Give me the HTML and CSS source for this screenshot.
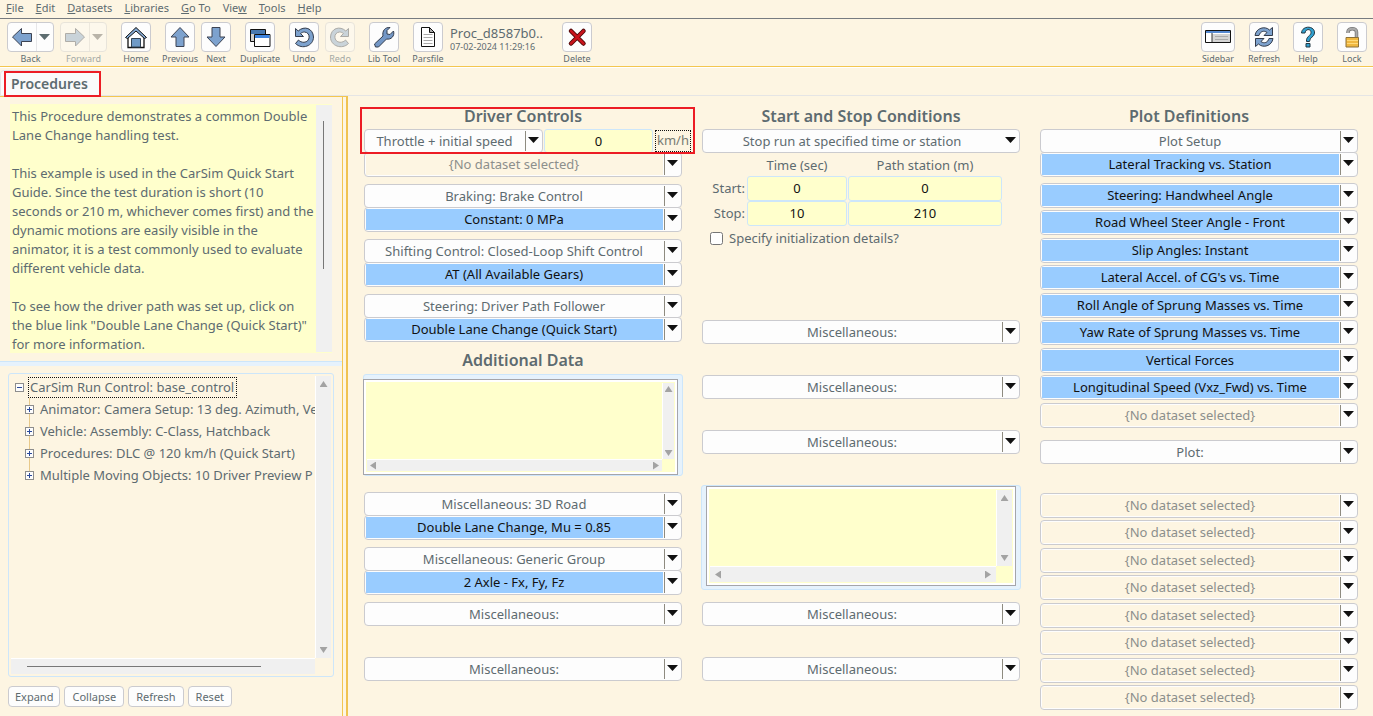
FILE: index.html
```
<!DOCTYPE html>
<html lang="en">
<head>
<meta charset="utf-8">
<title>Procedures</title>
<link rel="stylesheet" href="styles.css">
</head>
<body>
<nav class="menu">
<a href="#"><u>F</u>ile</a><a href="#"><u>E</u>dit</a><a href="#"><u>D</u>atasets</a><a href="#"><u>L</u>ibraries</a><a href="#"><u>G</u>o To</a><a href="#">Vie<u>w</u></a><a href="#"><u>T</u>ools</a><a href="#"><u>H</u>elp</a>
</nav>
<header class="toolbar">
<div class="group">
<button class="tool wide"><span class="face"><svg class="icon" viewBox="0 0 24 24"><path d="M2.500 12 11.500 3.500V8.500H21.500V16.500H11.500V21Z" fill="#7da2ce" stroke="#3c4353"/></svg><svg class="drop" viewBox="0 0 17 28"><path d="M0 0V28" stroke="#d0d0d4"/><path d="M3 11H14L8.500 17Z" fill="#5d6d70"/></svg></span><span>Back</span></button>
<button class="tool wide" disabled><span class="face"><svg class="icon" viewBox="0 0 24 24"><path d="M21.500 12 12.500 3.500V8.500H2.500V16.500H12.500V21Z" fill="#7da2ce" stroke="#3c4353"/></svg><svg class="drop" viewBox="0 0 17 28"><path d="M0 0V28" stroke="#b0b0b4"/><path d="M3 11H14L8.500 17Z" fill="#555"/></svg></span><span>Forward</span></button>
</div>
<div class="group">
<button class="tool"><span class="face"><svg class="icon" viewBox="0 0 24 24"><path d="M4 11.500V22.500H20V11.500L12 4Z" fill="#fff" stroke="#111" stroke-width="1.300"/><path d="M7.500 13.500H16.500V22H7.500Z" fill="#6f9ac6" stroke="#345"/><path d="M1.500 12.500 12 2.500 22.500 12.500 20.500 13.500 12 6 3.500 13.500Z" fill="#86acd7" stroke="#111"/></svg></span><span>Home</span></button>
</div>
<div class="group">
<button class="tool"><span class="face"><svg class="icon" viewBox="0 0 24 24"><path d="M12 2.500 21 12H16V21.500H8V12H3Z" fill="#7da2ce" stroke="#3c4353"/></svg></span><span>Previous</span></button>
<button class="tool"><span class="face"><svg class="icon" viewBox="0 0 24 24"><path d="M12 21.500 21 12H16V2.500H8V12H3Z" fill="#7da2ce" stroke="#3c4353"/></svg></span><span>Next</span></button>
</div>
<div class="group">
<button class="tool"><span class="face"><svg class="icon" viewBox="0 0 24 24"><path d="M2.500 4.500H17.500V16.500H2.500Z" fill="#cfcfcf" stroke="#111"/><path d="M3 5H17V9H3Z" fill="#4878b0"/><path d="M6.500 9.500H22V21.500H6.500Z" fill="#fff" stroke="#111"/><path d="M7 10H21.500V13H7Z" fill="#3f85e0"/></svg></span><span>Duplicate</span></button>
</div>
<div class="group">
<button class="tool"><span class="face"><svg class="icon" viewBox="0 0 24 24"><path d="M3.500 3.500V11.500H11.500L8.500 8.500C10 7.500 11 7 12.500 7C19 7.500 18.500 17 12 17.300C9.500 17.300 8 16.500 6.500 15L3.500 18.500C10 25 21.500 21 21.500 12C21 3 12 .5 6.200 6Z" fill="#7da2ce" stroke="#333c4c"/></svg></span><span>Undo</span></button>
<button class="tool" disabled><span class="face"><svg class="icon" viewBox="0 0 24 24"><path d="M20.500 3.500V11.500H12.500L15.500 8.500C14 7.500 13 7 11.500 7C5 7.500 5.500 17 12 17.300C14.500 17.300 16 16.500 17.500 15L20.500 18.500C14 25 2.500 21 2.500 12C3 3 12 .5 17.800 6Z" fill="#7da2ce" stroke="#333c4c"/></svg></span><span>Redo</span></button>
</div>
<div class="group">
<button class="tool"><span class="face"><svg class="icon" viewBox="0 0 24 24"><path d="M2.500 19 11 11C10 6 13 2 18 2.500L15 5.500V9L18 9.500 21.500 6C23 11 19 15 14.500 14L6.500 22H3.500Z" fill="#7397c6" stroke="#333c4c"/></svg></span><span>Lib Tool</span></button>
</div>
<div class="group">
<button class="tool"><span class="face"><svg class="icon" viewBox="0 0 24 24"><path d="M5.500 2.500H13.500L18.500 7.500V21.500H5.500Z" fill="#fff" stroke="#111"/><path d="M13.500 2.500V7.500H18.500Z" fill="#aaa" stroke="#111"/><path d="M7.500 9.500H16.500M7.500 12.500H16.500M7.500 15.500H16.500M7.500 18.500H16.500" stroke="#aaa"/></svg></span><span>Parsfile</span></button>
<div class="record"><span class="record-name">Proc_d8587b0..</span><time>07-02-2024 11:29:16</time></div>
</div>
<div class="group">
<button class="tool"><span class="face"><svg class="icon" viewBox="0 0 24 24"><path d="M6 6 18.500 18.500M18.500 6 6 18.500" stroke="#4c0808" stroke-width="4.500" stroke-linecap="round"/><path d="M6 6 18.500 18.500M18.500 6 6 18.500" stroke="#c8141c" stroke-width="2.600" stroke-linecap="round"/></svg></span><span>Delete</span></button>
</div>
<div class="group end">
<button class="tool side"><span class="face"><svg class="icon-wide" viewBox="0 0 28 24"><path d="M1.500 5.500H26.500V17.500H1.500Z" fill="#fff" stroke="#111"/><path d="M2 6H26V8H2Z" fill="#5588d0"/><path d="M8 9H26V17H8Z" fill="#d4d4d4"/><path d="M8 8V17" stroke="#333"/><path d="M11 11.500H24M11 14.500H24" stroke="#aaa"/></svg></span><span>Sidebar</span></button>
<button class="tool"><span class="face"><svg class="icon" viewBox="0 0 24 24"><path d="M3 10.500C4 3 13 .5 17.500 5L20.500 2.500V10.500H12L15 7.500C12 5 8 6.500 7 10.500Z" fill="#7da2ce" stroke="#333c4c"/><path d="M21 13.500C20 21 11 23.500 6.500 19L3.500 21.500V13.500H12L9 16.500C12 19 16 17.500 17 13.500Z" fill="#7da2ce" stroke="#333c4c"/></svg></span><span>Refresh</span></button>
<button class="tool"><span class="face"><svg class="icon" viewBox="0 0 24 24"><path d="M5.500 8C6 0 19 .5 18.500 8C18.500 12 13.500 12 13.500 16.500H10.500C10 11 15 11 15 7.500C15 3.500 9.500 3.500 9 8Z" fill="#30a0d0" stroke="#233844"/><path d="M10 18.500H14V22H10Z" fill="#30a0d0" stroke="#233844"/></svg></span><span>Help</span></button>
<button class="tool"><span class="face"><svg class="icon" viewBox="0 0 24 24"><path d="M8 8V7C8 2.500 16.500 2.500 16.500 7V13" fill="none" stroke="#777" stroke-width="3.500"/><path d="M8 8V7C8 2.500 16.500 2.500 16.500 7V13" fill="none" stroke="#aaa" stroke-width="2"/><path d="M6 12.500H18.500V22H6Z" fill="#f0b840" stroke="#8c7138"/><path d="M7 15.500H18M7 18.500H18" stroke="#ffda7a"/></svg></span><span>Lock</span></button>
</div>
</header>
<div class="tabs"><button class="tab">Procedures<span class="mark"></span></button></div>
<div class="body">
<aside>
<div class="notes">
<div class="notes-text">This Procedure demonstrates a common Double<br>Lane Change handling test.<br><br>This example is used in the CarSim Quick Start<br>Guide. Since the test duration is short (10<br>seconds or 210 m, whichever comes first) and the<br>dynamic motions are easily visible in the<br>animator, it is a test commonly used to evaluate<br>different vehicle data.<br><br>To see how the driver path was set up, click on<br>the blue link "Double Lane Change (Quick Start)"<br>for more information.</div>
<div class="track"><i></i></div>
</div>
<div class="split"></div>
<div class="tree">
<ul>
<li class="root"><svg class="node" viewBox="0 0 9 9"><rect x=".5" y=".5" width="8" height="8" fill="#fdfdfd" stroke="#8d8d8d"/><path d="M2 4.500H7" stroke="#2b4a9a"/></svg><span class="focus">CarSim Run Control: base_control</span></li>
<li class="child"><svg class="node" viewBox="0 0 9 9"><rect x=".5" y=".5" width="8" height="8" fill="#fdfdfd" stroke="#8d8d8d"/><path d="M2 4.500H7M4.500 2V7" stroke="#2b4a9a"/></svg><span>Animator: Camera Setup: 13 deg. Azimuth, Ve</span></li>
<li class="child"><svg class="node" viewBox="0 0 9 9"><rect x=".5" y=".5" width="8" height="8" fill="#fdfdfd" stroke="#8d8d8d"/><path d="M2 4.500H7M4.500 2V7" stroke="#2b4a9a"/></svg><span>Vehicle: Assembly: C-Class, Hatchback</span></li>
<li class="child"><svg class="node" viewBox="0 0 9 9"><rect x=".5" y=".5" width="8" height="8" fill="#fdfdfd" stroke="#8d8d8d"/><path d="M2 4.500H7M4.500 2V7" stroke="#2b4a9a"/></svg><span>Procedures: DLC @ 120 km/h (Quick Start)</span></li>
<li class="child"><svg class="node" viewBox="0 0 9 9"><rect x=".5" y=".5" width="8" height="8" fill="#fdfdfd" stroke="#8d8d8d"/><path d="M2 4.500H7M4.500 2V7" stroke="#2b4a9a"/></svg><span>Multiple Moving Objects: 10 Driver Preview P</span></li>
</ul>
<div class="vbar"><i class="up"></i><i class="down"></i></div>
<div class="hbar"><b></b></div>
</div>
<div class="actions"><button>Expand</button><button>Collapse</button><button>Refresh</button><button>Reset</button></div>
</aside>
<main>
<section>
<div class="marked">
<h2>Driver Controls</h2>
<div class="speed">
<div class="combo"><select aria-label="Throttle mode"><option>Throttle + initial speed</option></select></div>
<input value="0" aria-label="Initial speed"><span class="focus unit">km/h</span>
</div>
<span class="mark"></span>
</div>
<div class="combo tall empty"><select aria-label="Throttle dataset"><option>{No dataset selected}</option></select></div>
<div class="pair"><div class="combo"><select aria-label="Braking"><option>Braking: Brake Control</option></select></div><div class="combo tall blue"><select aria-label="Braking dataset"><option>Constant: 0 MPa</option></select></div></div>
<div class="pair"><div class="combo"><select aria-label="Shifting"><option>Shifting Control: Closed-Loop Shift Control</option></select></div><div class="combo tall blue"><select aria-label="Shifting dataset"><option>AT (All Available Gears)</option></select></div></div>
<div class="pair"><div class="combo"><select aria-label="Steering"><option>Steering: Driver Path Follower</option></select></div><div class="combo tall blue"><select aria-label="Steering dataset"><option>Double Lane Change (Quick Start)</option></select></div></div>
<h2 class="additional">Additional Data</h2>
<div class="memo first"><div class="sheet"><textarea aria-label="Additional data"></textarea><div class="vbar"><i class="up"></i><i class="down"></i></div><div class="hbar"><i class="left"></i><i class="right"></i></div></div></div>
<div class="lower">
<div class="pair"><div class="combo"><select aria-label="Road"><option>Miscellaneous: 3D Road</option></select></div><div class="combo tall blue"><select aria-label="Road dataset"><option>Double Lane Change, Mu = 0.85</option></select></div></div>
<div class="pair"><div class="combo"><select aria-label="Generic group"><option>Miscellaneous: Generic Group</option></select></div><div class="combo tall blue"><select aria-label="Group dataset"><option>2 Axle - Fx, Fy, Fz</option></select></div></div>
<div class="slot"><div class="combo"><select aria-label="Miscellaneous 1"><option>Miscellaneous:</option></select></div></div>
<div class="combo"><select aria-label="Miscellaneous 2"><option>Miscellaneous:</option></select></div>
</div>
</section>
<section>
<h2>Start and Stop Conditions</h2>
<div class="combo plain"><select aria-label="Stop condition"><option>Stop run at specified time or station</option></select></div>
<div class="times">
<span></span><span class="head">Time (sec)</span><span class="head">Path station (m)</span>
<span>Start:</span><input value="0" aria-label="Start time"><input value="0" aria-label="Start station">
<span>Stop:</span><input value="10" aria-label="Stop time"><input value="210" aria-label="Stop station">
</div>
<label class="check"><input type="checkbox">Specify initialization details?</label>
<div class="middle">
<div class="slot"><div class="combo"><select aria-label="Miscellaneous 3"><option>Miscellaneous:</option></select></div></div>
<div class="slot"><div class="combo"><select aria-label="Miscellaneous 4"><option>Miscellaneous:</option></select></div></div>
<div class="slot"><div class="combo"><select aria-label="Miscellaneous 5"><option>Miscellaneous:</option></select></div></div>
</div>
<div class="memo second"><div class="sheet"><textarea aria-label="Extra data"></textarea><div class="vbar"><i class="up"></i><i class="down"></i></div><div class="hbar"><i class="left"></i><i class="right"></i></div></div></div>
<div class="slot"><div class="combo"><select aria-label="Miscellaneous 6"><option>Miscellaneous:</option></select></div></div>
<div class="combo"><select aria-label="Miscellaneous 7"><option>Miscellaneous:</option></select></div>
</section>
<section>
<h2 class="plot-title">Plot Definitions</h2>
<div class="combo"><select aria-label="Plot setup"><option>Plot Setup</option></select></div>
<div class="combo tall blue"><select aria-label="Plot 1"><option>Lateral Tracking vs. Station</option></select></div>
<div class="plots">
<div class="combo blue"><select aria-label="Plot 2"><option>Steering: Handwheel Angle</option></select></div>
<div class="combo blue"><select aria-label="Plot 3"><option>Road Wheel Steer Angle - Front</option></select></div>
<div class="combo blue"><select aria-label="Plot 4"><option>Slip Angles: Instant</option></select></div>
<div class="combo blue"><select aria-label="Plot 5"><option>Lateral Accel. of CG's vs. Time</option></select></div>
<div class="combo blue"><select aria-label="Plot 6"><option>Roll Angle of Sprung Masses vs. Time</option></select></div>
<div class="combo blue"><select aria-label="Plot 7"><option>Yaw Rate of Sprung Masses vs. Time</option></select></div>
<div class="combo blue"><select aria-label="Plot 8"><option>Vertical Forces</option></select></div>
<div class="combo blue"><select aria-label="Plot 9"><option>Longitudinal Speed (Vxz_Fwd) vs. Time</option></select></div>
<div class="combo empty"><select aria-label="Plot 10"><option>{No dataset selected}</option></select></div>
</div>
<div class="combo single"><select aria-label="Plot kind"><option>Plot:</option></select></div>
<div class="plots more">
<div class="combo empty"><select aria-label="Plot 11"><option>{No dataset selected}</option></select></div>
<div class="combo empty"><select aria-label="Plot 12"><option>{No dataset selected}</option></select></div>
<div class="combo empty"><select aria-label="Plot 13"><option>{No dataset selected}</option></select></div>
<div class="combo empty"><select aria-label="Plot 14"><option>{No dataset selected}</option></select></div>
<div class="combo empty"><select aria-label="Plot 15"><option>{No dataset selected}</option></select></div>
<div class="combo empty"><select aria-label="Plot 16"><option>{No dataset selected}</option></select></div>
<div class="combo empty"><select aria-label="Plot 17"><option>{No dataset selected}</option></select></div>
<div class="combo empty"><select aria-label="Plot 18"><option>{No dataset selected}</option></select></div>
</div>
</section>
</main>
</div>
</body>
</html>
```
FILE: styles.css
```
* { box-sizing: border-box; }
body {
  margin: 0;
  min-height: 100vh;
  display: flex;
  flex-direction: column;
  background: #fdf5e2;
  color: #5d6b70;
  font: 13px/19px "Noto Sans", "Open Sans", sans-serif;
}
button, select, input, textarea { font: inherit; color: inherit; margin: 0; }
svg { display: block; fill: none; }

.menu {
  display: flex;
  gap: 12px;
  height: 19px;
  padding: 0 6px;
  border-bottom: 1px solid #777b80;
  font-size: 11px;
  line-height: 16px;
}
.menu a { color: inherit; text-decoration: none; }

.toolbar {
  display: flex;
  gap: 14px;
  height: 48px;
  padding: 3px 6px 0 7px;
  border-bottom: 1px solid #f3c650;
}
.group { display: flex; gap: 6px; }
.end { margin-left: auto; gap: 14px; }
.tool {
  width: 30px;
  height: 42px;
  padding: 0;
  border: 0;
  background: none;
  display: flex;
  flex-direction: column;
  align-items: center;
  font-size: 9px;
  line-height: 14px;
  white-space: nowrap;
}
.wide { width: 47px; }
.side { width: 34px; }
.tool:disabled .face { opacity: 0.4; }
.tool:disabled { color: #a3a8a4; }
.face {
  flex: none;
  display: flex;
  align-items: center;
  justify-content: center;
  width: 100%;
  height: 30px;
  border: 1px solid #cbcbcf;
  border-radius: 4px;
  background: #fdfdfd;
}
.icon { width: 24px; height: 24px; }
.icon-wide { width: 28px; height: 24px; }
.drop { width: 17px; height: 28px; }
.wide .face { justify-content: space-between; padding-left: 2px; }
.record { display: flex; flex-direction: column; min-width: 99px; padding: 3px 0 0 1px; }
.record-name { line-height: 16px; }
.record time { font-size: 9px; line-height: 12px; }

.tabs {
  height: 29px;
  padding-top: 2px;
  border-top: 1px solid #fff;
  border-bottom: 1px solid #e5e5e5;
}
.tab {
  position: relative;
  height: 26px;
  width: 101px;
  padding: 0 0 0 10px;
  border: 1px solid #e5e5e5;
  border-radius: 4px 4px 0 0;
  background: #fafafa;
  font-size: 14px;
  font-weight: 600;
  text-align: left;
}
.mark {
  position: absolute;
  inset: 0 -1px -2px 3px;
  border: 2px solid #ec1c24;
  pointer-events: none;
}

.body { flex: 1; display: flex; }
aside {
  width: 348px;
  flex: none;
  display: flex;
  flex-direction: column;
  border-top: 1px solid #f3c650;
  border-right: 2px solid #f0c350;
  padding-right: 4px;
  box-shadow: inset -3px 0 #fdf5e2, inset -4px 0 #f3c650;
}
.notes, .split, .actions { flex: none; }
.notes { display: flex; margin: 7px 10px 8px; height: 249px; background: #ffc; }
.notes-text { flex: 1; min-width: 0; padding: 3px 0 0 2px; white-space: nowrap; }
.track { width: 16px; flex: none; margin: 1px 0; background: #f0f0f0; padding: 16px 7px 0; }
.track i { display: block; width: 1px; height: 148px; background: #777; }
.split { height: 5px; border-top: 1px solid #cde6fa; background: #e6f2fc; }
.tree {
  flex: 1;
  min-height: 0;
  margin: 7px 8px 0;
  border: 1px solid #cde6fa;
  border-radius: 3px;
  padding: 2px;
  display: grid;
  grid-template: minmax(0, 1fr) 16px / minmax(0, 1fr) 16px;
}
.tree ul { margin: 0; padding: 0 0 0 14px; list-style: none; overflow: hidden; }
.tree li { display: flex; align-items: center; gap: 6px; height: 22px; white-space: nowrap; }
.tree .root { margin-left: -10px; gap: 5px; }
.child { background: linear-gradient(90deg, transparent 4px, #e8c98a 4px 5px, transparent 5px); }
.child:last-child { background-size: 100% 50%; background-repeat: no-repeat; }
.node { width: 9px; height: 9px; flex: none; }
.focus { outline: 1px dotted #111; padding: 0 2px 0 1px; }

.vbar, .hbar { background: #f0f0f0; display: flex; justify-content: space-between; align-items: center; }
.vbar { flex-direction: column; border-left: 1px solid #fff; padding: 5px 0; }
.hbar { border-top: 1px solid #fff; padding: 0 5px; }
.hbar b { width: 234px; height: 1px; margin-left: 11px; background: #777; }
.up, .down { width: 8px; height: 6px; background: #a3a3a3; }
.left, .right { width: 6px; height: 8px; background: #a3a3a3; }
.up { clip-path: polygon(50% 0, 100% 100%, 0 100%); }
.down { clip-path: polygon(0 0, 100% 0, 50% 100%); }
.left { clip-path: polygon(0 50%, 100% 0, 100% 100%); }
.right { clip-path: polygon(0 0, 100% 50%, 0 100%); }

.actions { display: flex; gap: 4px; padding: 9px 8px 9px; }
.actions button {
  height: 21px;
  padding: 0 7px;
  border: 1px solid #cbcbcf;
  border-radius: 4px;
  background: #fdfdfd;
  font-size: 11px;
  line-height: 18px;
}
.actions button:first-child { padding: 0 6px; }

main {
  flex: 1;
  display: grid;
  grid-template-columns: repeat(3, minmax(0, 1fr));
  gap: 20px;
  padding: 9px 15px 0 16px;
}
h2 { margin: 0 0 2px; height: 22px; font-size: 16px; line-height: 22px; font-weight: 600; text-align: center; }
.plot-title { padding-right: 20px; }
.combo {
  position: relative;
  height: 24px;
  border: 1px solid #cbcbcf;
  border-radius: 4px;
  background: #fdfdfd;
  margin-bottom: -1px;
}
.combo.tall { height: 25px; margin-bottom: 0; }
.combo::before {
  content: "";
  position: absolute;
  right: 16px;
  top: 1px;
  bottom: 1px;
  width: 1px;
  background: #8e8b80;
}
.plain::before { display: none; }
.combo::after {
  content: "";
  position: absolute;
  right: 3px;
  top: 7px;
  width: 11px;
  height: 6px;
  background: #111;
  clip-path: polygon(0 0, 100% 0, 50% 100%);
  pointer-events: none;
}
.combo select {
  appearance: none;
  display: block;
  width: 100%;
  height: 100%;
  border: 0;
  padding: 0 19px 0 1px;
  background: none;
  text-align: center;
  text-align-last: center;
}
.blue select, .empty select {
  background: linear-gradient(#9cf, #9cf) 1px 1px / calc(100% - 19px) calc(100% - 2px) no-repeat;
}
.blue select { color: #111; }
.empty select { color: #8c8f8c; background-image: linear-gradient(#fdf5e2, #fdf5e2); }
.pair { padding-top: 7px; }

.marked { position: relative; }
.marked .mark { inset: 2px -13px -2px -4px; z-index: 1; }
.speed { display: flex; height: 23px; }
.speed .combo { flex: 0 0 179px; }
.speed input { flex: 1; min-width: 0; margin-left: 1px; height: 24px; }
.unit { width: 34px; margin: 2px -8px 0 3px; height: 20px; color: #777a72; white-space: nowrap; }
input:not([type]) {
  border: 1px solid #cde6fa;
  border-radius: 3px;
  background: #ffc;
  color: #111;
  text-align: center;
  padding: 0;
}

.additional { margin-top: 7px; margin-bottom: 3px; }
.memo { background: #e6f2fc; border: 1px solid #cde6fa; border-radius: 3px; }
.first { height: 102px; margin: 0 -1px; padding: 4px 4px 0 0; }
.first .sheet { margin-left: -1px; height: 96px; }
.second { height: 105px; margin: 0 -1px 12px; padding: 0 4px 4px; }
.second .sheet { height: 100px; }
.sheet {
  border: 1px solid #a5a5aa;
  background: #ffc;
  box-shadow: inset 0 0 0 2px #fff;
  padding: 3px;
  display: grid;
  grid-template: minmax(0, 1fr) 16px / minmax(0, 1fr) 16px;
}
.first .sheet { grid-template: minmax(0, 1fr) 12px / minmax(0, 1fr) 12px; }
.first .vbar { padding: 3px 0; }
.first .hbar { padding: 0 3px; }
.sheet textarea { border: 0; padding: 2px; resize: none; background: #ffc; width: 100%; height: 100%; }
.lower { padding-top: 9px; }
.slot { height: 55px; }
.lower .slot { margin-top: 7px; }

.times {
  display: grid;
  grid-template-columns: 44px 100px minmax(0, 154px);
  grid-template-rows: 23px 24px 24px;
  column-gap: 1px;
  row-gap: 1px;
  align-items: center;
  text-align: right;
}
.times span { padding-right: 1px; }
.times .head { padding: 4px 0 0; text-align: center; }
.times input { width: 100%; height: 25px; }
.check { display: flex; align-items: center; gap: 6px; padding-left: 8px; height: 26px; }
.check input { width: 13px; height: 13px; }
.middle { padding-top: 69px; height: 234px; }

.plots { padding-top: 3px; }
.plots .combo { height: 25px; margin: 2px 0 0; }
.plots .combo:nth-child(odd) { margin-top: 3px; }
.single { margin-top: 12px; }
.more { padding-top: 27px; }
```
